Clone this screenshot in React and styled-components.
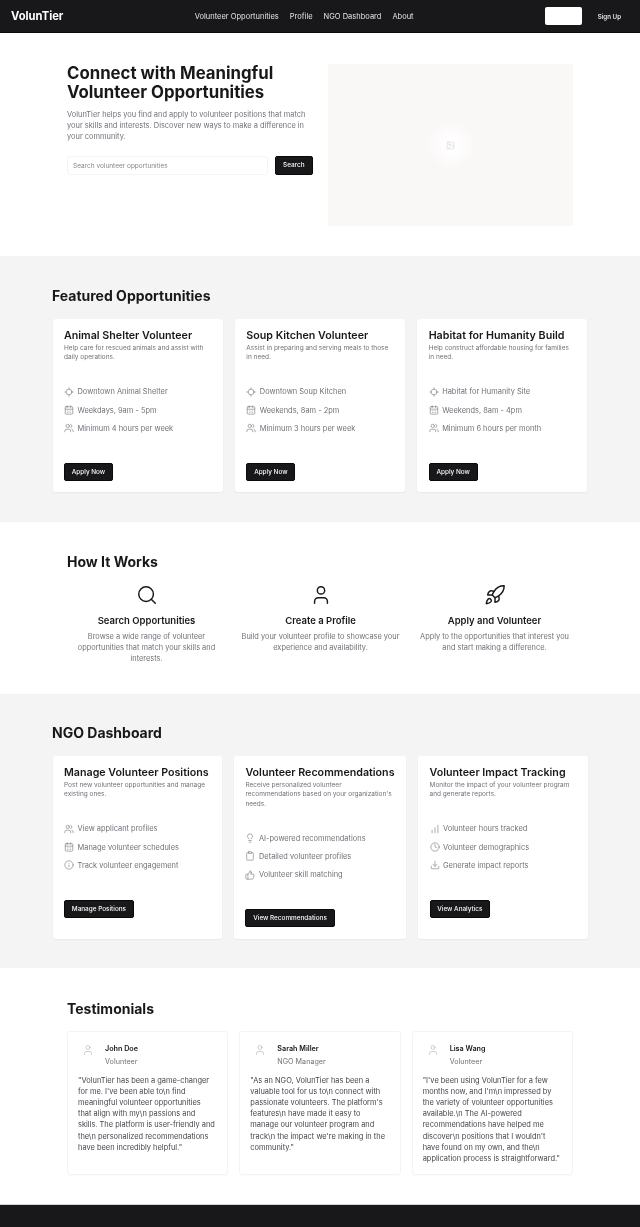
import React from 'react'
import styled, { createGlobalStyle } from 'styled-components'
import {
  Locate, CalendarDays, Users, Search, User, Rocket, Info, Lightbulb, Clipboard,
  ThumbsUp, BarChart, Clock, Download, Image as ImageIcon,
} from 'lucide-react'

const GlobalStyle = createGlobalStyle`
  * { box-sizing: border-box; }
  html, body { margin: 0; padding: 0; background: #fff; }
  body { font-family: Inter, "Liberation Sans", sans-serif; color: #18181b; }
`

const opportunities = [
  {
    title: 'Animal Shelter Volunteer',
    text: 'Help care for rescued animals and assist with daily operations.',
    rows: [[Locate, 'Downtown Animal Shelter'], [CalendarDays, 'Weekdays, 9am - 5pm'], [Users, 'Minimum 4 hours per week']],
    action: 'Apply Now',
  },
  {
    title: 'Soup Kitchen Volunteer',
    text: 'Assist in preparing and serving meals to those in need.',
    rows: [[Locate, 'Downtown Soup Kitchen'], [CalendarDays, 'Weekends, 8am - 2pm'], [Users, 'Minimum 3 hours per week']],
    action: 'Apply Now',
  },
  {
    title: 'Habitat for Humanity Build',
    text: 'Help construct affordable housing for families in need.',
    rows: [[Locate, 'Habitat for Humanity Site'], [CalendarDays, 'Weekends, 8am - 4pm'], [Users, 'Minimum 6 hours per month']],
    action: 'Apply Now',
  },
]

const dashboard = [
  {
    title: 'Manage Volunteer Positions',
    text: 'Post new volunteer opportunities and manage existing ones.',
    rows: [[Users, 'View applicant profiles'], [CalendarDays, 'Manage volunteer schedules'], [Info, 'Track volunteer engagement']],
    action: 'Manage Positions',
  },
  {
    title: 'Volunteer Recommendations',
    text: "Receive personalized volunteer recommendations based on your organization's needs.",
    rows: [[Lightbulb, 'AI-powered recommendations'], [Clipboard, 'Detailed volunteer profiles'], [ThumbsUp, 'Volunteer skill matching']],
    action: 'View Recommendations',
  },
  {
    title: 'Volunteer Impact Tracking',
    text: 'Monitor the impact of your volunteer program and generate reports.',
    rows: [[BarChart, 'Volunteer hours tracked'], [Clock, 'Volunteer demographics'], [Download, 'Generate impact reports']],
    action: 'View Analytics',
  },
]

const steps = [
  [Search, 'Search Opportunities', 'Browse a wide range of volunteer opportunities that match your skills and interests.'],
  [User, 'Create a Profile', 'Build your volunteer profile to showcase your experience and availability.'],
  [Rocket, 'Apply and Volunteer', 'Apply to the opportunities that interest you and start making a difference.'],
]

const testimonials = [
  ['John Doe', 'Volunteer', '"VolunTier has been a game-changer for me. I\'ve been able to\\n find meaningful volunteer opportunities that align with my\\n passions and skills. The platform is user-friendly and the\\n personalized recommendations have been incredibly helpful."'],
  ['Sarah Miller', 'NGO Manager', '"As an NGO, VolunTier has been a valuable tool for us to\\n connect with passionate volunteers. The platform\'s features\\n have made it easy to manage our volunteer program and track\\n the impact we\'re making in the community."'],
  ['Lisa Wang', 'Volunteer', '"I\'ve been using VolunTier for a few months now, and I\'m\\n impressed by the variety of volunteer opportunities available.\\n The AI-powered recommendations have helped me discover\\n positions that I wouldn\'t have found on my own, and the\\n application process is straightforward."'],
]

const Page = styled.div`
  width: 640px;
  min-height: 1227px;
  display: flex;
  flex-direction: column;
  will-change: transform;
`

const Header = styled.header`
  height: 33px;
  background: #18181b;
  display: flex;
  justify-content: space-between;
  align-items: center;
  padding: 0 19px 0 11px;
  color: #fff;
  border-bottom: 1px solid #09090b;
`

const Logo = styled.div`
  font-size: 11.2px;
  font-weight: 700;
`

const Nav = styled.nav`
  display: flex;
  gap: 11px;
  font-size: 7.5px;
  color: #e4e4e7;
`

const HeaderActions = styled.div`
  display: flex;
  align-items: center;
  gap: 16px;
  font-size: 6.2px;
  font-weight: 500;
`

const LoginButton = styled.div`
  width: 37px;
  height: 18px;
  background: #fff;
  border-radius: 2px;
`

const Hero = styled.section`
  height: 223px;
  padding: 31px 67px 0;
  display: grid;
  grid-template-columns: 246px 245px;
  gap: 15px;
  align-items: start;
`

const HeroTitle = styled.h1`
  margin: 0;
  font-size: 16.8px;
  line-height: 19px;
  font-weight: 700;
`

const HeroText = styled.p`
  margin: 7px 0 0;
  font-size: 7.45px;
  line-height: 11.2px;
  color: #71717a;
`

const SearchRow = styled.div`
  margin-top: 13px;
  display: flex;
  gap: 7px;
`

const SearchInput = styled.div`
  flex: 1;
  height: 19px;
  border: 1px solid #f4f4f5;
  border-radius: 3px;
  padding: 0 5px;
  font-size: 6.5px;
  line-height: 18px;
  color: #85858d;
`

const DarkButton = styled.button`
  height: ${(p) => (p.$tall ? 19 : 18)}px;
  padding: 0 ${(p) => (p.$tall ? 7.5 : 6.8)}px;
  background: #18181b;
  color: #fafafa;
  border: 1px solid #09090b;
  border-radius: 2px;
  font-family: inherit;
  font-size: 6.4px;
  font-weight: 500;
  white-space: nowrap;
`

const HeroImage = styled.div`
  height: 162px;
  background: #faf7f7;
  display: flex;
  align-items: center;
  justify-content: center;
  color: #bdbdc2;
`

const Glow = styled.div`
  width: 48px;
  height: 48px;
  border-radius: 50%;
  background: radial-gradient(circle, #fffefe 20%, #faf7f7 72%);
  display: flex;
  align-items: center;
  justify-content: center;
`

const Band = styled.section`
  background: ${(p) => (p.$grey ? '#f4f4f4' : '#fff')};
  height: ${(p) => p.$height}px;
  padding: ${(p) => p.$top}px ${(p) => p.$side}px 0;
`

const SectionTitle = styled.h2`
  margin: 0;
  font-size: 14px;
  line-height: 17px;
  font-weight: 700;
`

const CardGrid = styled.div`
  width: 535px;
  margin: 15px 0 0 0.5px;
  display: grid;
  grid-template-columns: repeat(3, 1fr);
  gap: 12px;
`

const Card = styled.article`
  height: ${(p) => p.$height}px;
  background: #fff;
  border-radius: 3px;
  padding: 11px 11.5px;
  box-shadow: 0 1px 2px rgba(0, 0, 0, 0.05);
`

const CardTitle = styled.h3`
  margin: 0;
  font-size: 10.7px;
  line-height: 12px;
  font-weight: 600;
  white-space: nowrap;
`

const CardText = styled.p`
  margin: 2px 0 0;
  font-size: 6.5px;
  line-height: 9.3px;
  color: #71717a;
`

const RowList = styled.ul`
  list-style: none;
  margin: 23.8px 0 0;
  padding: 0;
  display: flex;
  flex-direction: column;
  gap: 7.7px;
`

const Row = styled.li`
  display: flex;
  align-items: center;
  gap: 3.5px;
  height: 10.7px;
  font-size: 7.45px;
  color: #71717a;
`

const CardAction = styled.div`
  margin-top: 23.9px;
`

const Steps = styled.div`
  margin-top: 14px;
  display: grid;
  grid-template-columns: repeat(3, 159px);
  gap: 15px;
`

const Step = styled.div`
  display: flex;
  flex-direction: column;
  align-items: center;
  text-align: center;
`

const StepTitle = styled.h3`
  margin: 9px 0 0;
  font-size: 9.5px;
  line-height: 12px;
  font-weight: 600;
`

const StepText = styled.p`
  margin: 4px 0 0;
  font-size: 7.4px;
  line-height: 11.2px;
  color: #71717a;
`

const QuoteGrid = styled.div`
  margin-top: 14px;
  display: grid;
  grid-template-columns: repeat(3, 1fr);
  gap: 11px;
`

const QuoteCard = styled.article`
  height: 144px;
  border: 1px solid #f4f4f5;
  border-radius: 3px;
  padding: 10px 11.5px 10px 10px;
  box-shadow: 0 1px 1px rgba(0, 0, 0, 0.02);
`

const Person = styled.div`
  display: flex;
  align-items: flex-start;
  gap: 10px;
  padding: 2px 0 0 3px;
`

const Avatar = styled.div`
  width: 14px;
  display: flex;
  justify-content: center;
  color: #a1a1aa;
`

const PersonName = styled.div`
  font-size: 7.2px;
  line-height: 9px;
  font-weight: 600;
`

const PersonRole = styled.div`
  margin-top: 4px;
  font-size: 7.2px;
  line-height: 9px;
  color: #71717a;
`

const Quote = styled.p`
  margin: 8.5px 0 0;
  font-size: 7.45px;
  line-height: 11.2px;
  color: #45454d;
`

const Footer = styled.footer`
  flex: 1;
  background: #18181b;
  border-top: 1px solid #d4d4d8;
`

const InfoCard = ({ item, height }) => (
  <Card $height={height}>
    <CardTitle>{item.title}</CardTitle>
    <CardText>{item.text}</CardText>
    <RowList>
      {item.rows.map(([Icon, label]) => (
        <Row key={label}>
          <Icon size={10} strokeWidth={1.4} />
          {label}
        </Row>
      ))}
    </RowList>
    <CardAction>
      <DarkButton>{item.action}</DarkButton>
    </CardAction>
  </Card>
)

const App = () => (
  <Page>
    <GlobalStyle />
    <Header>
      <Logo>VolunTier</Logo>
      <Nav>
        <span>Volunteer Opportunities</span>
        <span>Profile</span>
        <span>NGO Dashboard</span>
        <span>About</span>
      </Nav>
      <HeaderActions>
        <LoginButton />
        <span>Sign Up</span>
      </HeaderActions>
    </Header>
    <Hero>
      <div>
        <HeroTitle>Connect with Meaningful Volunteer Opportunities</HeroTitle>
        <HeroText>
          VolunTier helps you find and apply to volunteer positions that match your skills and
          interests. Discover new ways to make a difference in your community.
        </HeroText>
        <SearchRow>
          <SearchInput>Search volunteer opportunities</SearchInput>
          <DarkButton $tall>Search</DarkButton>
        </SearchRow>
      </div>
      <HeroImage>
        <Glow>
          <ImageIcon size={9} strokeWidth={1} />
        </Glow>
      </HeroImage>
    </Hero>
    <Band $grey $height={266} $top={31} $side={52}>
      <SectionTitle>Featured Opportunities</SectionTitle>
      <CardGrid>
        {opportunities.map((item) => (
          <InfoCard key={item.title} item={item} height={173} />
        ))}
      </CardGrid>
    </Band>
    <Band $height={172} $top={31} $side={67}>
      <SectionTitle>How It Works</SectionTitle>
      <Steps>
        {steps.map(([Icon, title, text]) => (
          <Step key={title}>
            <Icon size={22} strokeWidth={1.6} />
            <StepTitle>{title}</StepTitle>
            <StepText>{text}</StepText>
          </Step>
        ))}
      </Steps>
    </Band>
    <Band $grey $height={274} $top={30} $side={52}>
      <SectionTitle>NGO Dashboard</SectionTitle>
      <CardGrid>
        {dashboard.map((item) => (
          <InfoCard key={item.title} item={item} height={183} />
        ))}
      </CardGrid>
    </Band>
    <Band $height={236} $top={32} $side={67}>
      <SectionTitle>Testimonials</SectionTitle>
      <QuoteGrid>
        {testimonials.map(([name, role, text]) => (
          <QuoteCard key={name}>
            <Person>
              <Avatar>
                <User size={12} strokeWidth={1} />
              </Avatar>
              <div>
                <PersonName>{name}</PersonName>
                <PersonRole>{role}</PersonRole>
              </div>
            </Person>
            <Quote>{text}</Quote>
          </QuoteCard>
        ))}
      </QuoteGrid>
    </Band>
    <Footer />
  </Page>
)

export default App
